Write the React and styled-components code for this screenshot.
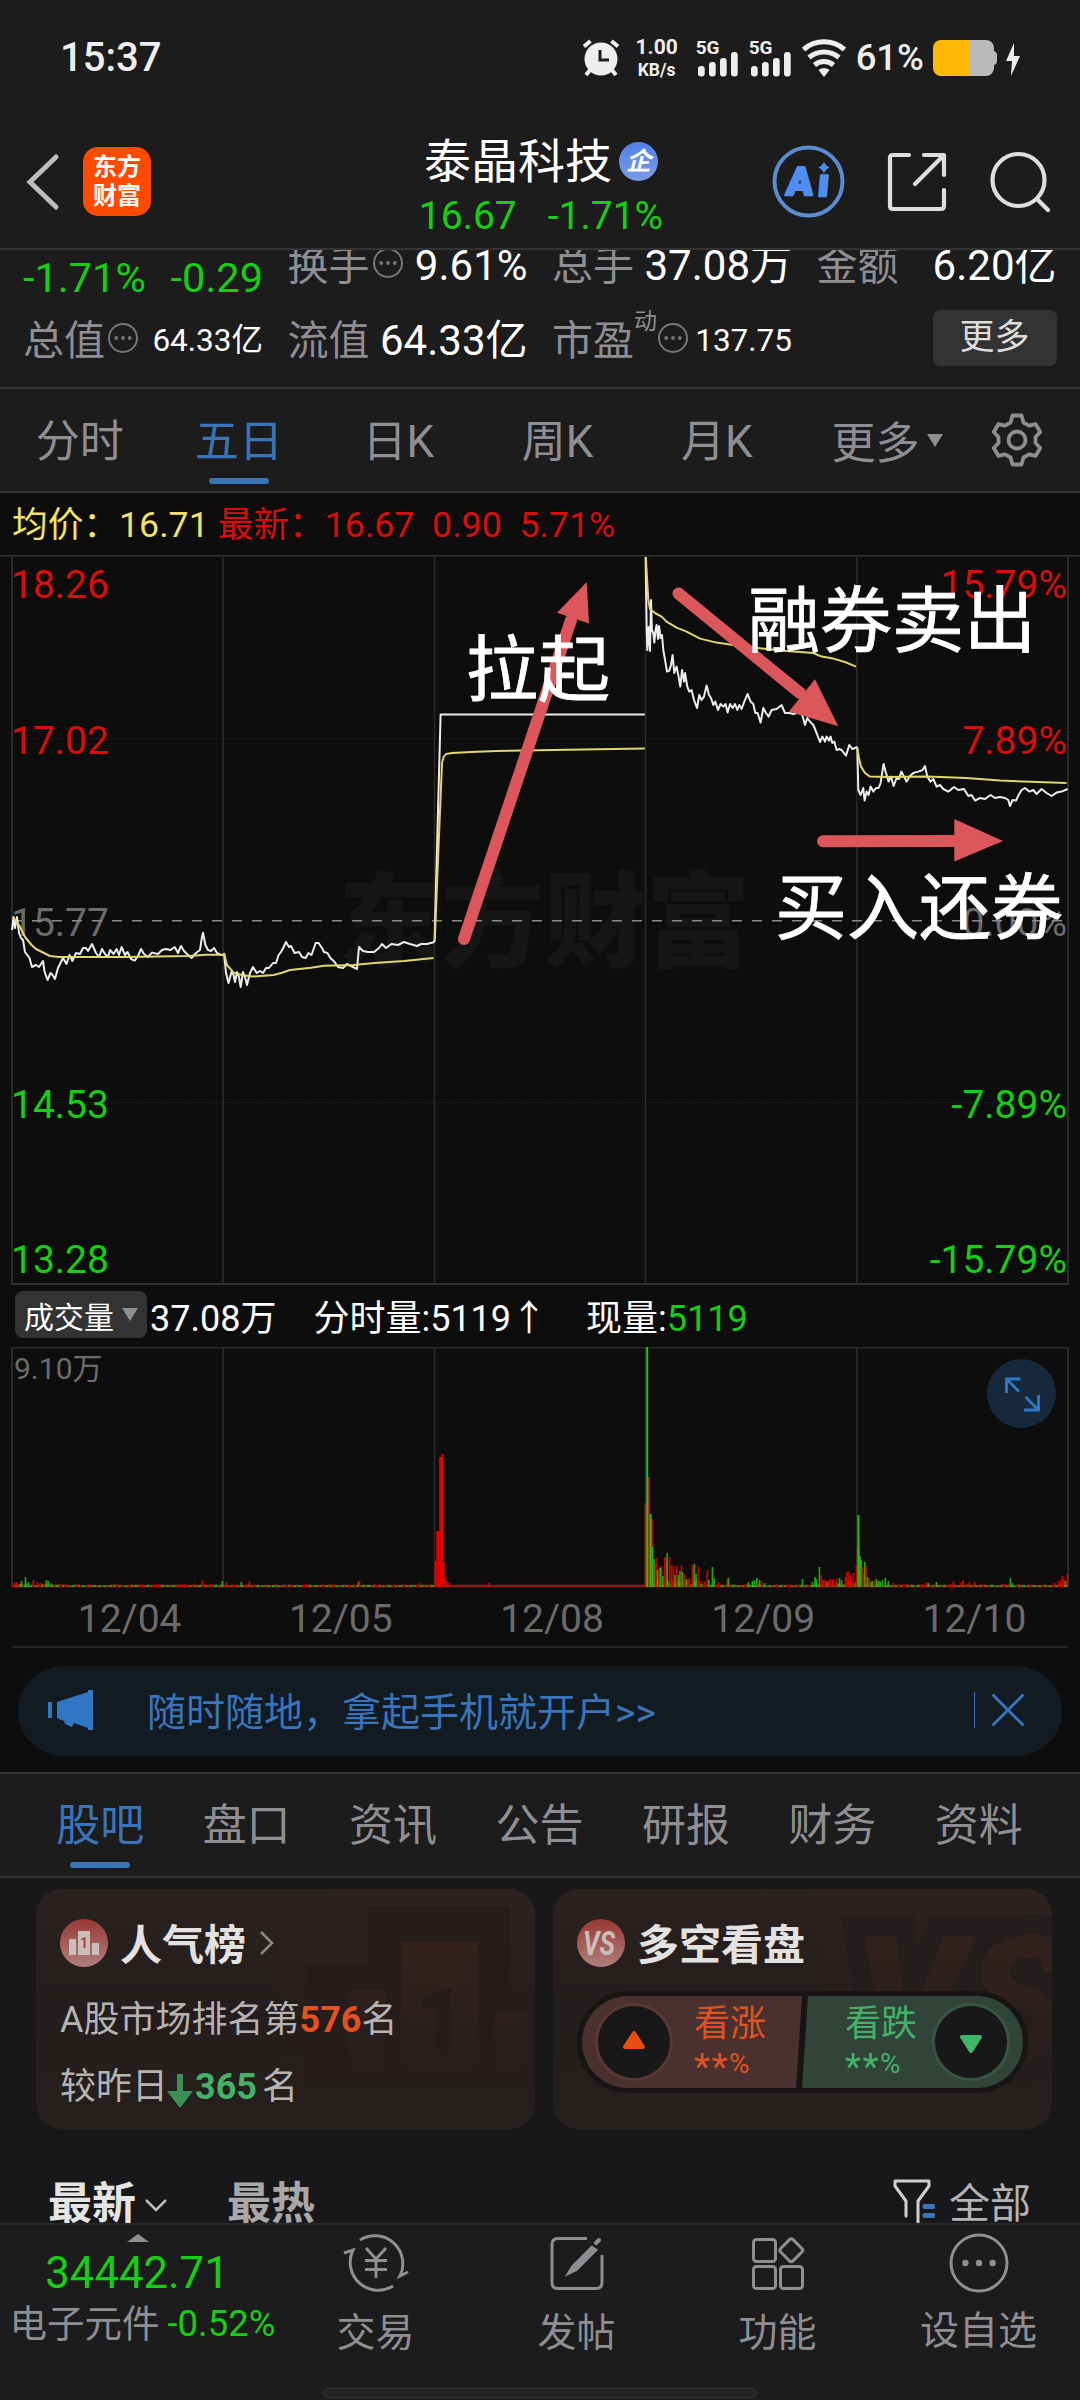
import styled, { createGlobalStyle, css } from "styled-components";

const GlobalStyle = createGlobalStyle`
  * {
    box-sizing: border-box;
  }

  body {
    margin: 0;
    background: #0d0d0d;
    font-family: Roboto, "Noto Sans CJK SC", sans-serif;
  }
`;

const color = {
  bar: "#1c1c1c",
  line: "#333333",
  gray: "#8e8e93",
  dim: "#6b6b6b",
  green: "#14cf14",
  red: "#da0c0c",
  blue: "#3a74ba",
};

const chartFont = 'Roboto, "Noto Sans CJK SC", sans-serif';

/* ---------- data ---------- */

const PERIODS = ["分时", "五日", "日K", "周K", "月K"];
const SECTIONS = ["股吧", "盘口", "资讯", "公告", "研报", "财务", "资料"];
const DATES = ["12/04", "12/05", "12/08", "12/09", "12/10"];

const PRICE_LABELS = [
  { y: 598, price: "18.26", percent: "15.79%", fill: color.red },
  { y: 754, price: "17.02", percent: "7.89%", fill: color.red },
  { y: 936, price: "15.77", percent: "0.00%", fill: color.dim },
  { y: 1118, price: "14.53", percent: "-7.89%", fill: color.green },
  { y: 1273, price: "13.28", percent: "-15.79%", fill: color.green },
];

const GRID_X = [223.2, 434.5, 645.5, 856.8];

const PRICE_LINE = [
  "12,930 13.5,917 15,928 17,917 19,933 21,938 23,940 25,952 29.5,958 32,967 36,965 39,967 43,961 44.6,972 47.6,980 50.5,973 52.6,975 55,979 58,968 63,958 66.5,964 69.5,955 72.4,961 76,953 80,954 83,948 86,948 88,951 92,944 96,953 99,957 102,949 105,954 108,957 110,950 113.6,954 116.6,949 119,955 121.6,947 125,955 127.5,952 131,959 134.7,960.6 138,956 141,949 144,954 148,957 152,952.6 158,954 162,950 166,949 170.5,950 174.7,947 178,953 181,946 184,951 187,954 191.5,958 196,953 200,950 202,937 203,932.7 205.4,945 208,950 211,951 214,948 217,953 221,955 223.5,955",
  "224,953 226,973 228.5,983 231.5,972 233.6,975 235,982 237,972 239,977 240.7,987 243,972 245,977 247,985 250,973 253,967 256.7,973 260,971 263,973 266,968 269,968 273,963 276,963 278.6,955 281,952 283.7,947 286,942 289,947 291,946 294.6,953 299,952 302,957 305.6,958 308.5,953 311.5,955 315.7,943 318.6,943 322,948 324,952 327.4,953 330.4,958 334.6,962 338,967 343,968 347,964 351,966 357,969 359,947 363,951 368,952 374,952 379,948 382,944 386,948 391.4,944 398,945 404,942 410,944 417,946 421,944 427,944 434.5,942",
  "434.5,942 440.6,714.5 644.8,714.5",
  "645.6,557 646.7,630 647.3,650 648.6,627 650,651 651,600 652,630 653.3,633 654.3,642.6 655.6,630 656.6,625 658,639 659,626 660.6,638 662,635 663.3,650 665.6,663 667,671.6 669.3,670.6 671,665 672.6,655 674.3,673 676.6,666.6 678.6,676.6 680.3,686.6 682,670 684,681.6 685,673 687.3,686.6 689.3,691.6 691.6,690 694,700 697,708 699.3,695 701.6,700 704,696.6 706.6,685.6 709,695 711,698 713.3,705 715.3,701.6 718,710 720.6,704 723.3,706.6 725.6,704 727.6,712.6 730,704 732.6,708 735,704 737.3,710 739.3,705 741.6,709 744.3,701.6 747.6,694 750.6,701.6 753.3,704 755.3,713 757.6,713 760.6,722.6 763.3,708 766,713 768.6,716.6 771.6,710 776.6,709 781.6,705 785,713 789.3,713 793.3,714 798.3,712.6 802.3,715 805,725 807.3,718 810,721.6 813.3,725 816.6,733 820,742 822.3,736.6 825,741.6 826.6,736.6 829,740.6 830.6,736.6 832.3,743 834.3,741.6 836.6,750 839.3,749 841.6,750 846,755.6 849.3,745 852.3,749 855,748 857.3,747",
  "857.3,747 858.3,790 860.6,795 863.3,788 864.6,800.6 866.6,791.6 868.6,795 870.6,786.6 873.3,791.6 876,788 878.6,788 880.6,783 883.6,764 886,773 888.6,781.6 891,776.6 893.6,786 896.6,778 899,779 901.3,771.6 904,776.6 906.6,781.6 910,776 913.3,773 918.3,771.6 922.6,770 925,766 927.3,776.6 930.6,781.6 933.3,779 936.6,786.6 940,785 943.3,789 948.3,791.6 954,787 958.3,790 964,789 968.3,796 971.6,795 975,800.6 980,798 985,799 990.6,795 995,798 1000,797 1005,798 1008.3,800 1010,806 1012.6,800 1016,800.6 1018.6,795 1021.6,790 1025,788 1029.3,791.6 1033.3,790 1036.6,794 1041.6,789 1046.6,793 1051.6,796 1056.6,792.6 1061.6,791.6 1067.6,789",
];

const AVERAGE_LINE = [
  "13,917 19,925 25,937 31.6,945 36,949 42,952 50,956 59,957 84,957 126,957 189,956 206,954.7 223,954.7",
  "224,953 227,965 233.6,972.6 242,975 252.5,976.6 273.6,975 282,972.7 290,970 311,967.7 324,965.7 353.5,965 374.6,963 404,961 433.5,958",
  "434.8,940 438,860 442,763 443.6,757 446,754 452.5,753 471,752 496.6,751 568,749.7 644.8,748.6",
  "645.8,557 648.3,600 650,609 655,613 661.6,616.6 666.6,621.6 676.6,627.6 686.6,631.6 700,638.6 716.6,642.6 740,646 766.6,649 786.6,651 813.3,653 821.6,656.6 833.3,658.6 845,662 856,666.6",
  "857,747 859,758 861,766.6 865,773 870,776.6 886.6,777 926.6,776.6 966.6,778 1000,780.6 1066.6,783",
];

// [x, height, isUp]
const VOLUME_PEAKS = [
  [16, 5, 1], [21, 6, 0], [25, 10, 0], [28, 5, 0], [33, 7, 1], [37, 5, 1], [46, 7, 0], [48, 6, 0],
  [202, 7, 1], [222, 6, 0], [226, 5, 1], [241, 5, 0], [249, 6, 1], [358, 5, 0], [359, 6, 1],
  [419, 4, 1], [435, 26, 1], [436.6, 56, 1], [438, 56, 1], [439.6, 130, 1], [441, 130, 1],
  [442, 133, 1], [443.4, 24, 1], [445, 10, 1], [447, 6, 1], [449, 4, 1], [488, 4, 1],
  [645, 84, 1], [648.3, 110, 1], [646.6, 240, 0], [651.2, 68, 1], [650, 73, 0], [652.2, 40, 0],
  [653.6, 28, 0], [656, 29, 1], [655, 23, 1], [657.2, 17, 0], [659, 20, 1], [661, 21, 1],
  [660, 19, 0], [662.4, 11, 0], [664.4, 30, 1], [665.6, 29, 1], [666.8, 34, 0], [669.2, 30, 1],
  [671, 22, 1], [673, 21, 1], [674.6, 12, 0], [676, 21, 1], [678, 12, 0], [679.6, 16, 0],
  [681, 22, 1], [682, 15, 0], [684, 13, 1], [686, 8, 0], [689, 9, 1], [692, 22, 1], [693.8, 23, 0],
  [695.6, 13, 0], [698, 20, 1], [701, 6, 1], [704, 6, 1], [707, 17, 1], [708.4, 7, 0],
  [712, 20, 0], [713.6, 9, 0], [718, 5, 1], [727, 8, 1], [728, 9, 0], [748, 5, 0], [752, 6, 0],
  [754, 7, 0], [756.4, 9, 0], [759, 7, 0], [761, 6, 1], [764, 4, 0], [802, 8, 0], [812, 5, 0],
  [814.6, 10, 0], [816, 8, 0], [819, 20, 0], [820.8, 12, 1], [822, 7, 1], [825, 7, 1],
  [830, 8, 1], [833, 8, 1], [836, 8, 1], [839, 9, 0], [841, 7, 0], [845, 10, 1], [846.6, 15, 1],
  [848, 16, 1], [849.6, 12, 1], [851, 9, 1], [853, 14, 1], [856, 22, 1], [857.2, 40, 1],
  [858.8, 44, 1], [857.8, 72, 0], [859.6, 31, 0], [860.8, 27, 0], [861.8, 21, 1], [863, 14, 1],
  [864.4, 25, 0], [865.8, 21, 1], [867, 10, 0], [869, 9, 1], [872, 6, 0], [876, 8, 0],
  [878, 6, 0], [882, 7, 0], [884.8, 9, 0], [888, 6, 0], [893, 4, 1], [926, 5, 1], [928, 4, 0],
  [936, 5, 0], [953, 6, 1], [960, 5, 1], [962.5, 7, 1], [969, 5, 1], [974, 5, 1], [1010, 9, 0],
  [1012, 4, 0], [1054, 4, 1], [1058, 6, 1], [1060, 7, 1], [1061.8, 11, 1], [1063.4, 8, 1],
  [1065, 6, 0], [1067, 13, 1],
];

// quiet minutes between the peaks
const VOLUME_BASE = Array.from({ length: 600 }, (_, i) => {
  const x = 12 + i * 1.76;
  const wave = Math.abs(Math.sin(i * 12.9898) * 43758.5453) % 1;
  const busy = (x > 646 && x < 702) || (x > 822 && x < 880);
  const tall = busy ? 5 : x < 52 ? 1.8 : 0;
  return [x, 1.6 + wave * (1.2 + tall), i % 3 === 0 || wave > 0.7];
}).filter(([x]) => x < 1067 && (x < 434 || x > 645));

/* ---------- layout ---------- */

const Screen = styled.main`
  display: flex;
  flex-direction: column;
  width: 1080px;
  height: 2400px;
  overflow: hidden;
  background: #0d0d0d;
  color: #ffffff;
`;

const StatusBar = styled.div`
  display: flex;
  justify-content: space-between;
  align-items: center;
  height: 115px;
  padding: 0 59px 0 60px;
  background: ${color.bar};
  color: #eeeeee;
`;

const Clock = styled.span`
  font-size: 40px;
  font-weight: 500;
`;

const StatusIcons = styled.div`
  display: flex;
  align-items: center;
`;

const NetSpeed = styled.div`
  display: flex;
  flex-direction: column;
  align-items: center;
  width: 42px;
  margin: 1px 18px 0 16px;
  font-size: 21px;
  font-weight: 700;
  line-height: 23px;

  small {
    font-size: 17.500px;
    line-height: 22px;
  }
`;

const Signal = styled.div`
  display: flex;
  flex-direction: column;
  width: 53px;
  height: 37px;
  margin-top: 3px;
  font-size: 19px;
  font-weight: 700;
  line-height: 14px;

  svg {
    margin: -4px 0 0 2px;
  }
`;

const BatteryText = styled.span`
  margin: 0 9px 0 10px;
  font-size: 36.500px;
  font-weight: 500;
`;

const Header = styled.header`
  display: grid;
  grid-template-columns: 1fr auto 1fr;
  align-items: center;
  height: 135px;
  padding: 0 29px 0 25px;
  background: ${color.bar};
  border-bottom: 2px solid ${color.line};
`;

const HeaderSide = styled.div`
  display: flex;
  align-items: center;
  justify-content: ${({ $end }) => ($end ? "flex-end" : "flex-start")};
  gap: ${({ $end }) => ($end ? "42px" : "22px")};
`;

const Logo = styled.div`
  width: 68px;
  height: 69px;
  padding-top: 6px;
  border-radius: 15px;
  background: #ff4a00;
  font-size: 24px;
  font-weight: 700;
  line-height: 29px;
  text-align: center;
`;

const StockTitle = styled.div`
  display: flex;
  flex-direction: column;
  align-items: center;
  padding: 14px 0 0 6px;
`;

const StockName = styled.h1`
  display: flex;
  align-items: center;
  gap: 7px;
  height: 54px;
  margin: 0;
  font-size: 47px;
  font-weight: 400;
  line-height: 54px;
`;

const CompanyBadge = styled.span`
  width: 39px;
  height: 39px;
  border-radius: 50%;
  background: linear-gradient(#5280e6, #7a9ce6);
  font-size: 25px;
  font-weight: 700;
  font-style: italic;
  line-height: 39px;
  text-align: center;
`;

const StockPrice = styled.div`
  display: flex;
  gap: 31px;
  color: ${color.green};
  font-size: 39px;
  line-height: 54px;
`;

const QuoteStrip = styled.section`
  display: grid;
  grid-template-columns: repeat(4, 240px);
  grid-template-rows: 60px 76px;
  column-gap: 24.500px;
  height: 139px;
  padding: 0 23px;
  overflow: hidden;
  background: ${color.bar};
  border-bottom: 2px solid ${color.line};

  & > * {
    margin-top: -14px;
    height: 60px;
  }

  & > :nth-child(n + 5) {
    margin-top: 0;
    height: 61px;
  }
`;

const Quote = styled.div`
  display: flex;
  align-items: center;
  white-space: nowrap;
`;

const QuoteLabel = styled.span`
  color: ${color.gray};
  font-size: 41px;
  line-height: 48px;
`;

const QuoteValue = styled.span`
  margin-left: auto;
  font-size: ${({ $small }) => ($small ? "31.500px" : "42px")};
  line-height: 48px;
`;

const QuoteSup = styled.sup`
  align-self: flex-start;
  margin-right: -2px;
  color: ${color.gray};
  font-size: 23px;
  line-height: 24px;
`;

const QuoteChange = styled.div`
  display: flex;
  justify-content: space-between;
  padding-top: 25px;
  color: ${color.green};
  font-size: 41.500px;
  line-height: 34px;
`;

const MoreButton = styled.button`
  align-self: start;
  justify-self: end;
  width: 124px;
  && {
    height: 56px;
  }
  padding: 0;
  border: 0;
  border-radius: 7px;
  background: #333333;
  color: #dddddd;
  font: 35px/54px ${chartFont};
`;

const Tabs = styled.nav`
  display: flex;
  height: ${({ $height }) => $height}px;
  padding: ${({ $pad }) => $pad};
  background: ${color.bar};
  border-bottom: 2px solid ${color.line};
`;

const Tab = styled.div`
  display: flex;
  flex-direction: column;
  align-items: center;
  flex: ${({ $width }) => ($width ? `0 0 ${$width}px` : "1")};
  padding-top: ${({ $top }) => $top}px;
  color: ${({ $active }) => ($active ? color.blue : color.gray)};
  font-size: 44px;
  line-height: 52px;

  ${({ $active, $gap }) =>
    $active &&
    css`
      &::after {
        content: "";
        width: 60px;
        height: 6px;
        margin-top: ${$gap}px;
        border-radius: 3px;
        background: ${color.blue};
      }
    `}
`;

const MoreTab = styled.div`
  display: flex;
  align-items: center;
  gap: 8px;
  width: 182px;
  padding-left: 35px;
  color: ${color.gray};
  font-size: 44px;
`;

const Triangle = styled.i`
  width: 0;
  height: 0;
  border: ${({ $w }) => $w / 2}px solid transparent;
  border-top: ${({ $h, $up }) => ($up ? "0" : `${$h}px solid ${color.gray}`)};
  border-bottom: ${({ $h, $up }) => ($up ? `${$h}px solid ${color.gray}` : "0")};
`;

const GearBox = styled.div`
  display: flex;
  align-items: center;
  padding-left: 12px;
`;

const ChartInfo = styled.div`
  display: flex;
  gap: 9px;
  height: 62px;
  padding-left: 12px;
  color: ${color.red};
  font-size: 35.700px;
  line-height: 64px;
  white-space: pre;

  b {
    color: #f2e268;
    font-weight: 400;
  }
`;

const Chart = styled.svg`
  display: block;
  flex: none;
`;

const VolumeInfo = styled.div`
  display: flex;
  align-items: center;
  height: 62px;
  padding: 0 0 3px 15px;
  font-size: 36px;
  white-space: pre;
`;

const Indicator = styled.div`
  display: flex;
  align-items: center;
  gap: 8px;
  width: 132px;
  height: 47px;
  margin-right: 3px;
  padding-left: 9px;
  border-radius: 8px;
  background: #333333;
  font-size: 30px;
`;

const VolumeText = styled.span`
  margin-right: ${({ $gap = 0 }) => $gap}px;

  em {
    color: ${color.green};
    font-style: normal;
  }
`;

const VolumeChart = styled.section`
  position: relative;
`;

const ExpandButton = styled.button`
  position: absolute;
  top: 12px;
  right: 24px;
  width: 69px;
  height: 69px;
  padding: 0;
  border: 0;
  border-radius: 50%;
  background: #16283c;
`;

const DateRow = styled.div`
  display: flex;
  height: 60px;
  margin: 0 12px;
  border-bottom: 2px solid #242424;
  color: ${color.dim};
  font-size: 39px;
  line-height: 63px;

  span {
    flex: 1;
    padding-left: 24px;
    text-align: center;
  }
`;

const Banner = styled.div`
  display: flex;
  align-items: center;
  height: 90px;
  margin: 18px 18px 16px;
  padding: 0 38px 0 30px;
  border-radius: 45px;
  background: #121a22;
  color: ${color.blue};
  font-size: 39px;

  p {
    flex: 1;
    margin: 0 0 5px 54px;
  }

  svg,
  i {
    position: relative;
    top: -1px;
  }
`;

const Divider = styled.i`
  width: 1px;
  height: 36px;
  margin-right: 17px;
  background: ${color.blue};
`;

const TabsBorder = styled.div`
  border-top: 2px solid ${color.line};
`;

const Cards = styled.section`
  display: flex;
  gap: 18px;
  height: 251px;
  padding: 11px 28px 0 36px;
  background: #18181a;
`;

const Card = styled.article`
  position: relative;
  width: 499px;
  height: 240px;
  padding: 30px 24px;
  overflow: hidden;
  border-radius: 26px;
  background: linear-gradient(#2a2220, #241d1d 50%, #251f1d);
`;

const CardArt = styled.svg`
  position: absolute;
  inset: 0;
`;

const CardTitle = styled.h2`
  position: relative;
  display: flex;
  align-items: center;
  height: 48px;
  margin: 0;
  color: #e2e2e2;
  font-size: 42px;
  font-weight: 700;
  line-height: 48px;

  span {
    margin: 6px 13px 0 12px;
  }
`;

const CardText = styled.p`
  position: relative;
  display: flex;
  align-items: center;
  margin: ${({ $top }) => $top}px 0 0;
  color: #b4b4b4;
  font-size: 36px;
  line-height: 44px;
`;

const Highlight = styled.b`
  margin: ${({ $margin = 0 }) => $margin};
  color: ${({ $down }) => ($down ? "#45b067" : "#e25222")};
  font-weight: 700;
`;

const Versus = styled.div`
  position: relative;
  display: flex;
  width: 451px;
  height: 102px;
  margin-top: 24px;
  border: 5px solid #181416;
  border-radius: 51px;
  background: #181416;
  overflow: hidden;
`;

const Side = styled.div`
  display: flex;
  align-items: center;
  flex-direction: ${({ $down }) => ($down ? "row-reverse" : "row")};
  gap: ${({ $down }) => ($down ? "13px" : "21px")};
  width: ${({ $down }) => ($down ? "221px" : "220px")};
  padding: ${({ $down }) => ($down ? "0 13px 0 0" : "0 0 0 13px")};
  background: ${({ $down }) => ($down ? "#30443a" : "#4a302f")};
  color: ${({ $down }) => ($down ? "#45b067" : "#dd5424")};
  clip-path: ${({ $down }) =>
    $down
      ? "polygon(6px 0, 100% 0, 100% 100%, 0 100%)"
      : "polygon(0 0, 100% 0, calc(100% - 6px) 100%, 0 100%)"};
`;

const SideIcon = styled.div`
  display: flex;
  align-items: center;
  justify-content: center;
  width: 78px;
  height: 78px;
  border: 3px solid ${({ $down }) => ($down ? "#385444" : "#5a3735")};
  border-radius: 50%;
  background: #18181a;
`;

const SideText = styled.div`
  display: flex;
  flex-direction: column;
  width: 74px;
  padding-top: 5px;
  font-size: 36px;
  line-height: 42px;

  small {
    display: flex;
    height: 41px;
    font-size: 28px;
    line-height: 37px;
  }

  small b {
    padding-top: 2px;
    margin-right: 1.500px;
    font-size: 37px;
    font-weight: 400;
    line-height: 40px;
  }
`;

const SortRow = styled.div`
  display: flex;
  align-items: flex-start;
  flex: none;
  height: 94px;
  padding: 49px 49px 0 48px;
  overflow: hidden;
  background: #18181a;
  font-size: 44px;
  line-height: 53px;
`;

const SortItem = styled.span`
  display: flex;
  align-items: center;
  margin-right: 60px;
  gap: 9px;
  color: ${({ $active }) => ($active ? "#e4e4e4" : "#a8a8a8")};
  font-weight: 700;
`;

const Filter = styled.span`
  display: flex;
  gap: 14px;
  margin-left: auto;
  color: #b4b4b4;
  font-size: 41px;
`;

const BottomBar = styled.footer`
  display: flex;
  height: 165px;
  background: ${color.bar};
  border-top: 2px solid #292929;
`;

const IndexBlock = styled.div`
  display: flex;
  flex-direction: column;
  align-items: center;
  width: 275px;
  padding-top: 9px;
`;

const IndexValue = styled.strong`
  margin: 4px 0 0 -1px;
  color: ${color.green};
  font-size: 43.700px;
  font-weight: 400;
  line-height: 54px;
`;

const IndexName = styled.div`
  display: flex;
  gap: 8px;
  margin-left: 10px;
  color: ${color.gray};
  font-size: 37.500px;
  line-height: 48px;
  white-space: nowrap;

  em {
    color: ${color.green};
    font-size: 36.500px;
    font-style: normal;
  }
`;

const NavItem = styled.div`
  display: flex;
  flex-direction: column;
  align-items: center;
  gap: 12px;
  width: 201px;
  padding-top: 6px;
  color: ${color.gray};
  font-size: 39px;
  line-height: 48px;
`;

const HomeArea = styled.div`
  flex: 1;
  background: ${color.bar};
`;

const HomeIndicator = styled.div`
  width: 434px;
  height: 10px;
  margin: 0 auto;
  border: 1px solid #343434;
  border-radius: 5px;
  background: #232323;
`;

/* ---------- icons ---------- */

function AlarmIcon() {
  return (
    <svg width="38" height="38" viewBox="0 0 38 38" fill="none" stroke="#eee">
      <circle cx="19" cy="20" r="16.5" fill="#eee" stroke="none" />
      <path d="M2 7.5 8.5 2M36 7.5 29.5 2M8 31l-4 5M30 31l4 5" strokeWidth="4" />
      <path d="M18 11v10h9" stroke={color.bar} strokeWidth="3" />
    </svg>
  );
}

function SignalBars() {
  return (
    <svg width="41" height="26" viewBox="0 0 41 26" fill="#eee">
      <rect x="0" y="15" width="6.7" height="10.5" rx="3" />
      <rect x="11" y="11" width="6.7" height="14.5" rx="3" />
      <rect x="22" y="7" width="6.7" height="18.5" rx="3" />
      <rect x="33" y="1" width="6.7" height="24.5" rx="3" />
    </svg>
  );
}

function WifiIcon() {
  return (
    <svg width="44" height="38" viewBox="0 0 44 38" fill="none" stroke="#eee" strokeWidth="5">
      <path d="M1.6 10.5a31 31 0 0 1 40.8 0M7 18.5a23 23 0 0 1 30 0M12.5 26a15 15 0 0 1 19 0" />
      <path d="M22 38l-5.5-7q5.5-4 11 0z" fill="#eee" stroke="none" />
    </svg>
  );
}

function BatteryIcon() {
  return (
    <svg width="88" height="36" viewBox="0 0 88 36">
      <path d="M36 0h17a8 8 0 0 1 8 8v3q3 1 3 4v6q0 3-3 4v3a8 8 0 0 1-8 8H36z" fill="#bababa" />
      <path d="M8 0h29v36H8a8 8 0 0 1-8-8V8a8 8 0 0 1 8-8z" fill="#ffb905" />
      <path d="M81 3 73 21h6l-1 15 9-20h-6z" fill="#eee" />
    </svg>
  );
}

function BackIcon() {
  return (
    <svg width="36" height="58" viewBox="0 0 36 58" fill="none" stroke="#bdbdbd" strokeWidth="5">
      <path d="M31 4 5 29l26 25" strokeLinecap="round" />
    </svg>
  );
}

function AiIcon() {
  return (
    <svg width="73" height="73" viewBox="0 0 73 73">
      <circle cx="36.5" cy="36.5" r="34" fill="none" stroke="#5b8bd3" strokeWidth="4" />
      <g
        fill="#4f8df0"
        stroke="#4f8df0"
        strokeWidth="2.4"
        strokeLinejoin="round"
        fontFamily="Roboto"
        fontWeight="900"
        fontSize="39"
      >
        <text transform="translate(13.5 50) skewX(-5)">A</text>
        <text transform="translate(45 51) skewX(-5)">ı</text>
      </g>
      <path d="M52 16.500q1.500 4.500 6 6-4.500 1.500-6 6-1.500-4.500-6-6 4.500-1.500 6-6z" fill="#4f8df0" />
    </svg>
  );
}

function ShareIcon() {
  return (
    <svg
      width="60"
      height="60"
      viewBox="0 0 60 60"
      fill="none"
      stroke="#dedede"
      strokeWidth="4.2"
      strokeLinecap="round"
      strokeLinejoin="round"
    >
      <path d="M22 3H6q-3 0-3 3v48q0 3 3 3h48q3 0 3-3V38" />
      <path d="M37 3h20v20M56 4 28 32" />
    </svg>
  );
}

function SearchIcon() {
  return (
    <svg width="62" height="62" viewBox="0 0 62 62" fill="none" stroke="#dedede" strokeWidth="4.2">
      <circle cx="29.5" cy="29" r="26" />
      <path d="M48 48l11 11" strokeLinecap="round" />
    </svg>
  );
}

function DotsIcon({ size, stroke, fill, r }) {
  return (
    <svg width={size} height={size} viewBox="0 0 32 32" fill="none" stroke={fill}>
      <circle cx="16" cy="16" r="14" strokeWidth={stroke} />
      <g fill={fill} stroke="none">
        <circle cx="9.2" cy="16" r={r} />
        <circle cx="16" cy="16" r={r} />
        <circle cx="22.8" cy="16" r={r} />
      </g>
    </svg>
  );
}

const Hint = styled.span`
  display: flex;
  margin: -6px 2px 0 2px;
`;

function HintIcon() {
  return (
    <Hint>
      <DotsIcon size={32} stroke={2} fill="#77777b" r={1.9} />
    </Hint>
  );
}

function GearIcon() {
  return (
    <svg width="54" height="54" viewBox="0 0 54 54" fill="none" stroke={color.gray} strokeWidth="3.8">
      <path
        d="M22.5 2.500h9l2 7 5.5 3.2 6.700-1.500 4.500 7.800-4.700 5v6l4.700 5-4.500 7.800-6.700-1.500-5.500 3.200-2 7h-9l-2-7-5.500-3.200-6.700 1.500L3.800 35l4.700-5v-6l-4.700-5 4.500-7.800 6.700 1.500 5.500-3.200z"
        strokeLinejoin="round"
      />
      <circle cx="27" cy="27" r="8.5" />
    </svg>
  );
}

function ExpandIcon() {
  return (
    <svg width="69" height="69" viewBox="0 0 69 69" fill="none" stroke="#3077c6" strokeWidth="2.8">
      <path d="M33.5 20H19.500v14M20 20.500 32 32.500M37 51h14.500V36M51 50.500 38.500 38" />
    </svg>
  );
}

function HornIcon() {
  return (
    <svg width="45" height="40" viewBox="0 0 45 40" fill="#3077c6">
      <path d="M0 12h4v16H0zM9 12 40 2V0h5v40h-5v-2l-14-5-2 4-7-3-1-3-7-3z" />
    </svg>
  );
}

function CloseIcon() {
  return (
    <svg width="32" height="32" viewBox="0 0 32 32" stroke={color.blue} strokeWidth="3">
      <path d="M1.500 1.500l29 29M30.500 1.500l-29 29" strokeLinecap="round" />
    </svg>
  );
}

function RankIcon() {
  return (
    <svg width="48" height="48" viewBox="0 0 48 48">
      <defs>
        <linearGradient id="badge" x1="0" y1="0" x2="0" y2="1">
          <stop offset="0" stopColor="#983933" />
          <stop offset="1" stopColor="#b0807c" />
        </linearGradient>
      </defs>
      <circle cx="24" cy="24" r="24" fill="url(#badge)" />
      <path d="M9 20h7v16H9zM18 12h12v24H18zM32 24h7v12h-7z" fill="#cbbdbc" />
      <text x="20" y="29" fontSize="14" fontWeight="700" fontFamily="Roboto" fill="#a34a44">
        1
      </text>
    </svg>
  );
}

function VsIcon() {
  return (
    <svg width="48" height="48" viewBox="0 0 48 48">
      <circle cx="24" cy="24" r="24" fill="url(#badge)" />
      <text
        x="6"
        y="35.500"
        fontSize="33"
        fontWeight="700"
        fontStyle="italic"
        fontFamily="Roboto"
        fill="#cbbdbc"
        textLength="32"
        lengthAdjust="spacingAndGlyphs"
      >
        VS
      </text>
    </svg>
  );
}

function FilterIcon() {
  return (
    <svg width="43" height="48" viewBox="0 0 43 48" fill="none" stroke="#d0d0d0" strokeWidth="3">
      <path d="M14 38V23L3 8V3h34v5L26 23v24" strokeLinejoin="round" strokeLinecap="round" />
      <path d="M33 28.500h8M33 37.500h8" stroke={color.blue} strokeWidth="5" strokeLinecap="round" />
    </svg>
  );
}

function TradeIcon() {
  return (
    <svg width="66" height="66" viewBox="0 0 66 66" fill="none" stroke={color.gray} strokeWidth="3">
      <path d="M17 9a28 28 0 0 1 40 36l8-4M50 55A28 28 0 0 1 10 19L1 22" />
      <path d="M23 17l10 11 10-11M33 28v19M22 29.500h22M22 38.500h22" />
    </svg>
  );
}

function PostIcon() {
  return (
    <svg width="66" height="66" viewBox="0 0 66 66" fill="none" stroke={color.gray} strokeWidth="3">
      <path d="M43 7.500H14q-6 0-6 6v38q0 6 6 6h38q6 0 6-6V24" />
      <path d="M48 17 29 36l-3 5 6-3 19-19zM52 12l3-3" strokeWidth="4" fill={color.gray} strokeLinecap="round" />
    </svg>
  );
}

function FeatureIcon() {
  return (
    <svg width="66" height="66" viewBox="0 0 66 66" fill="none" stroke={color.gray} strokeWidth="3">
      <rect x="8.5" y="8.5" width="22" height="22" rx="3" />
      <rect x="8.5" y="35.5" width="22" height="22" rx="3" />
      <rect x="35.5" y="35.5" width="22" height="22" rx="3" />
      <rect x="37.5" y="10.5" width="17.5" height="17.5" rx="2.5" transform="rotate(45 46.3 19.3)" />
    </svg>
  );
}

/* ---------- charts ---------- */

function Arrow({ from, neck, head }) {
  return (
    <g fill="#dc575c" stroke="#dc575c">
      <line x1={from[0]} y1={from[1]} x2={neck[0]} y2={neck[1]} strokeWidth="12" strokeLinecap="round" />
      <polygon points={head} stroke="none" />
    </g>
  );
}

function PriceChart() {
  return (
    <Chart width="1080" height="730" viewBox="0 555 1080 730" fontFamily={chartFont}>
      <text x="338" y="959" fontSize="103" fontWeight="900" fill="#151515">
        东方财富
      </text>
      <g stroke="#2a2a2a" strokeWidth="1.5">
        <path d="M0 555.7h1080" stroke="#333" />
        <path d="M12 555v729M1068 555v729" strokeWidth="2" />
        {GRID_X.map((x) => (
          <path key={x} d={`M${x} 557v727`} />
        ))}
        <path d="M12 738.7h1056M12 1102.5h1056" strokeDasharray="1 2" strokeWidth="1" />
        <path d="M11 1284h1058" stroke="#333" strokeWidth="2" />
      </g>
      {PRICE_LABELS.map((l) => (
        <g key={l.price} fill={l.fill} fontSize="39">
          <text x="11" y={l.y}>
            {l.price}
          </text>
          <text x="1067" y={l.y} textAnchor="end">
            {l.percent}
          </text>
        </g>
      ))}
      <path d="M12 920.7h1056" stroke="#8a8a8a" strokeWidth="1.6" strokeDasharray="10 10" />
      <g fill="none" strokeWidth="2" strokeLinejoin="round">
        {PRICE_LINE.map((points) => (
          <polyline key={points} points={points} stroke="#ececec" />
        ))}
        {AVERAGE_LINE.map((points) => (
          <polyline key={points} points={points} stroke="#e0d670" />
        ))}
      </g>
      <Arrow from={[464, 939]} neck={[571, 620]} head="586.7,582 557,612.7 589,623.5" />
      <Arrow from={[678.5, 593.5]} neck={[800, 693]} head="838.3,726.3 815,679.3 789,711.5" />
      <Arrow from={[823, 841.3]} neck={[955, 841]} head="1003,841 954.3,819 954.3,861.5" />
      <g fontSize="72" fill="#ffffff" stroke="#ffffff" strokeWidth="0.8">
        <text x="466" y="695">
          拉起
        </text>
        <text x="748" y="646">
          融券卖出
        </text>
        <text x="775" y="933">
          买入还券
        </text>
      </g>
    </Chart>
  );
}

function VolumeBars() {
  return (
    <Chart width="1080" height="241" viewBox="0 1347 1080 241" fontFamily={chartFont}>
      <path d="M11 1347.8h1058" stroke="#2a2a2a" strokeWidth="1.5" />
      <path d="M12 1347v240M1068 1347v240" stroke="#2a2a2a" strokeWidth="2" />
      {GRID_X.map((x) => (
        <path key={x} d={`M${x} 1347v240`} stroke="#2a2a2a" strokeWidth="1.5" />
      ))}
      <text x="14" y="1379" fontSize="30" fill={color.dim}>
        9.10万
      </text>
      <path d="M12 1586.5h1056" stroke="#7c2018" strokeWidth="1.5" />
      <path d="M434 1585.8h211" stroke="#8c1c1c" strokeWidth="2" />
      {[...VOLUME_BASE, ...VOLUME_PEAKS].map(([x, height, up], i) => (
        <rect
          key={i}
          x={x - 0.4}
          y={1587 - height}
          width={height > 60 ? 2 : 1.7}
          height={height}
          fill={up ? "#e60000" : "#1fc11f"}
          opacity={height > 60 || (x > 434 && x < 452) ? 1 : 0.85}
        />
      ))}
    </Chart>
  );
}

function RankArt() {
  return (
    <CardArt width="499" height="240" viewBox="0 0 499 240">
      <defs>
        <linearGradient id="art" x1="0" y1="0" x2="0" y2="1">
          <stop offset="0" stopColor="#35221f" />
          <stop offset="1" stopColor="#35221f" stopOpacity="0" />
        </linearGradient>
      </defs>
      <path d="M243 39h55V0h201v200H243z" fill="url(#art)" opacity="0.3" />
      <path d="M270 75h62V17h142v85h25v95H270z" fill="#241d1c" />
      <path d="M365 53h77v143h-77zM312 101h38v95h-38zM458 124h33v72h-33z" fill="url(#art)" />
      <path d="M385 109l30-10v64h-16v-47l-14 5z" fill="#241d1c" />
    </CardArt>
  );
}

function VersusArt() {
  return (
    <CardArt width="499" height="240" viewBox="0 0 499 240">
      <path d="M259 0h240v200l-45 24-60-24-108 12z" fill="url(#art)" opacity="0.3" />
      <text
        x="300"
        y="172"
        fontSize="175"
        fontWeight="900"
        fontStyle="italic"
        fontFamily="Roboto"
        fill="url(#art)"
        stroke="#241d1d"
        strokeWidth="40"
        paintOrder="stroke"
      >
        VS
      </text>
    </CardArt>
  );
}

/* ---------- page ---------- */

function Stars() {
  return (
    <small>
      <b>*</b>
      <b>*</b>%
    </small>
  );
}

function App() {
  return (
    <Screen>
      <GlobalStyle />
      <StatusBar>
        <Clock>15:37</Clock>
        <StatusIcons>
          <AlarmIcon />
          <NetSpeed>
            1.00<small>KB/s</small>
          </NetSpeed>
          <Signal>
            5G
            <SignalBars />
          </Signal>
          <Signal>
            5G
            <SignalBars />
          </Signal>
          <WifiIcon />
          <BatteryText>61%</BatteryText>
          <BatteryIcon />
        </StatusIcons>
      </StatusBar>

      <Header>
        <HeaderSide>
          <BackIcon />
          <Logo>
            东方
            <br />
            财富
          </Logo>
        </HeaderSide>
        <StockTitle>
          <StockName>
            泰晶科技<CompanyBadge>企</CompanyBadge>
          </StockName>
          <StockPrice>
            <span>16.67</span>
            <span>-1.71%</span>
          </StockPrice>
        </StockTitle>
        <HeaderSide $end>
          <AiIcon />
          <ShareIcon />
          <SearchIcon />
        </HeaderSide>
      </Header>

      <QuoteStrip>
        <QuoteChange>
          <span>-1.71%</span>
          <span>-0.29</span>
        </QuoteChange>
        <Quote>
          <QuoteLabel>换手</QuoteLabel>
          <HintIcon />
          <QuoteValue>9.61%</QuoteValue>
        </Quote>
        <Quote>
          <QuoteLabel>总手</QuoteLabel>
          <QuoteValue>37.08万</QuoteValue>
        </Quote>
        <Quote>
          <QuoteLabel>金额</QuoteLabel>
          <QuoteValue>6.20亿</QuoteValue>
        </Quote>
        <Quote>
          <QuoteLabel>总值</QuoteLabel>
          <HintIcon />
          <QuoteValue $small>64.33亿</QuoteValue>
        </Quote>
        <Quote>
          <QuoteLabel>流值</QuoteLabel>
          <QuoteValue>64.33亿</QuoteValue>
        </Quote>
        <Quote>
          <QuoteLabel>市盈</QuoteLabel>
          <QuoteSup>动</QuoteSup>
          <HintIcon />
          <QuoteValue $small>137.75</QuoteValue>
        </Quote>
        <MoreButton>更多</MoreButton>
      </QuoteStrip>

      <Tabs $height={104} $pad="0">
        {PERIODS.map((name) => (
          <Tab key={name} $width={159.3} $top={27} $gap={10} $active={name === "五日"}>
            {name}
          </Tab>
        ))}
        <MoreTab>
          更多
          <Triangle $w={16} $h={13} />
        </MoreTab>
        <GearBox>
          <GearIcon />
        </GearBox>
      </Tabs>

      <ChartInfo>
        <b>均价：16.71</b>
        <span>最新：16.67  0.90  5.71%</span>
      </ChartInfo>
      <PriceChart />

      <VolumeInfo>
        <Indicator>
          成交量
          <Triangle $w={16} $h={13} />
        </Indicator>
        <VolumeText $gap={37}>37.08万</VolumeText>
        <VolumeText $gap={39}>分时量:5119↑</VolumeText>
        <VolumeText>
          现量:<em>5119</em>
        </VolumeText>
      </VolumeInfo>
      <VolumeChart>
        <VolumeBars />
        <ExpandButton>
          <ExpandIcon />
        </ExpandButton>
      </VolumeChart>
      <DateRow>
        {DATES.map((date) => (
          <span key={date}>{date}</span>
        ))}
      </DateRow>

      <Banner>
        <HornIcon />
        <p>随时随地，拿起手机就开户&gt;&gt;</p>
        <Divider />
        <CloseIcon />
      </Banner>

      <TabsBorder>
        <Tabs $height={104} $pad="0 28px 0 27px">
          {SECTIONS.map((name) => (
            <Tab key={name} $top={26} $gap={10} $active={name === "股吧"}>
              {name}
            </Tab>
          ))}
        </Tabs>
      </TabsBorder>

      <Cards>
        <Card>
          <RankArt />
          <CardTitle>
            <RankIcon />
            <span>人气榜</span>
            <svg width="16" height="26" viewBox="0 0 16 26" fill="none" stroke="#8a8686" strokeWidth="2.5">
              <path d="M2 2l11 11L2 24" />
            </svg>
          </CardTitle>
          <CardText $top={31}>
            A股市场排名第<Highlight>576</Highlight>名
          </CardText>
          <CardText $top={23}>
            较昨日
            <svg width="26" height="34" viewBox="0 0 26 34" style={{ margin: "8px 0 0 -1px" }}>
              <path d="M10 0h6v17h10L13 34 0 17h10z" fill="#3c8f55" />
            </svg>
            <Highlight $down $margin="0 5px 0 2px">
              365
            </Highlight>
            名
          </CardText>
        </Card>
        <Card>
          <VersusArt />
          <CardTitle>
            <VsIcon />
            <span>多空看盘</span>
          </CardTitle>
          <Versus>
            <Side>
              <SideIcon>
                <svg width="24" height="20" viewBox="0 0 24 20" style={{ marginTop: -4 }}>
                  <path d="M12 3 3 17h18z" fill="#e84e12" stroke="#e84e12" strokeWidth="4" strokeLinejoin="round" />
                </svg>
              </SideIcon>
              <SideText>
                看涨
                <Stars />
              </SideText>
            </Side>
            <Side $down>
              <SideIcon $down>
                <svg width="24" height="20" viewBox="0 0 24 20" style={{ marginTop: 4 }}>
                  <path d="M12 17 3 3h18z" fill="#3fb766" stroke="#3fb766" strokeWidth="4" strokeLinejoin="round" />
                </svg>
              </SideIcon>
              <SideText>
                看跌
                <Stars />
              </SideText>
            </Side>
          </Versus>
        </Card>
      </Cards>

      <SortRow>
        <SortItem $active>
          最新
          <svg width="22" height="14" viewBox="0 0 22 14" fill="none" stroke="#bdbdbd" strokeWidth="2.5">
            <path d="M1 2l10 10L21 2" />
          </svg>
        </SortItem>
        <SortItem>最热</SortItem>
        <Filter>
          <FilterIcon />
          全部
        </Filter>
      </SortRow>

      <BottomBar>
        <IndexBlock>
          <Triangle $w={22} $h={8} $up />
          <IndexValue>34442.71</IndexValue>
          <IndexName>
            电子元件<em>-0.52%</em>
          </IndexName>
        </IndexBlock>
        <NavItem>
          <TradeIcon />
          交易
        </NavItem>
        <NavItem>
          <PostIcon />
          发帖
        </NavItem>
        <NavItem>
          <FeatureIcon />
          功能
        </NavItem>
        <NavItem>
          <DotsIcon size={64} stroke={1.5} fill={color.gray} r={1.6} />
          设自选
        </NavItem>
      </BottomBar>
      <HomeArea>
        <HomeIndicator />
      </HomeArea>
    </Screen>
  );
}

export default App;
